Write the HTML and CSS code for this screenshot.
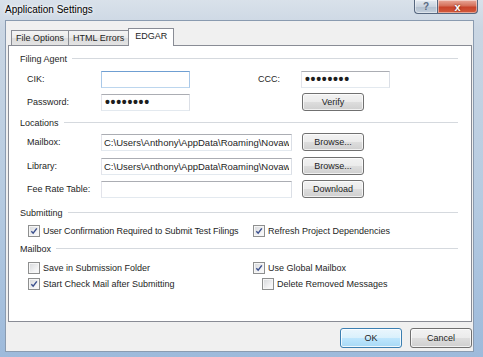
FILE: index.html
```html
<!DOCTYPE html>
<html lang="en">
<head>
  <meta charset="UTF-8">
  <title>Application Settings</title>
  <link rel="stylesheet" href="styles.css">
</head>
<body>
  <div class="window">
    <div class="titlebar">
      <span class="title">Application Settings</span>
      <div class="caption">
        <span class="cap-btn help">?</span>
        <span class="cap-btn close">x</span>
      </div>
    </div>

    <div class="client">
      <div class="tabs">
        <div class="tab">File Options</div>
        <div class="tab">HTML Errors</div>
        <div class="tab active">EDGAR</div>
      </div>

      <div class="panel">
        <!-- Filing Agent -->
        <div class="group-title">Filing Agent<span class="line"></span></div>
        <div class="row r1">
          <label class="lbl">CIK:</label>
          <input class="box small focus" type="text" value="">
          <label class="lbl ccc">CCC:</label>
          <input class="box small pw" type="password" value="abcdefgh">
        </div>
        <div class="row r2">
          <label class="lbl">Password:</label>
          <input class="box small pw" type="password" value="abcdefgh">
          <button class="btn verify" type="button">Verify</button>
        </div>

        <!-- Locations -->
        <div class="group-title g2">Locations<span class="line"></span></div>
        <div class="row r3">
          <label class="lbl">Mailbox:</label>
          <input class="box wide" type="text" value="C:\Users\Anthony\AppData\Roaming\Novaworks">
          <button class="btn" type="button">Browse...</button>
        </div>
        <div class="row r4">
          <label class="lbl">Library:</label>
          <input class="box wide" type="text" value="C:\Users\Anthony\AppData\Roaming\Novaworks">
          <button class="btn" type="button">Browse...</button>
        </div>
        <div class="row r5">
          <label class="lbl">Fee Rate Table:</label>
          <input class="box wide" type="text" value="">
          <button class="btn" type="button">Download</button>
        </div>

        <!-- Submitting -->
        <div class="group-title g3">Submitting<span class="line"></span></div>
        <div class="checks c1">
          <div class="check-col">
            <span class="cb on"><svg viewBox="0 0 12 12"><path d="M2.8 6.2 L5 8.6 L9.4 2.8"/></svg></span>
            <span class="tight">User Confirmation Required to Submit Test Filings</span>
          </div>
          <div class="check-col">
            <span class="cb on"><svg viewBox="0 0 12 12"><path d="M2.8 6.2 L5 8.6 L9.4 2.8"/></svg></span>
            Refresh Project Dependencies
          </div>
        </div>

        <!-- Mailbox -->
        <div class="group-title g4">Mailbox<span class="line"></span></div>
        <div class="checks c2">
          <div class="check-col">
            <span class="cb"></span>
            Save in Submission Folder
          </div>
          <div class="check-col">
            <span class="cb on"><svg viewBox="0 0 12 12"><path d="M2.8 6.2 L5 8.6 L9.4 2.8"/></svg></span>
            Use Global Mailbox
          </div>
        </div>
        <div class="checks c3">
          <div class="check-col">
            <span class="cb on"><svg viewBox="0 0 12 12"><path d="M2.8 6.2 L5 8.6 L9.4 2.8"/></svg></span>
            Start Check Mail after Submitting
          </div>
          <div class="check-col indent">
            <span class="cb"></span>
            Delete Removed Messages
          </div>
        </div>
      </div>

      <div class="footer">
        <button class="btn big default" type="button">OK</button>
        <button class="btn big" type="button">Cancel</button>
      </div>
    </div>
  </div>
</body>
</html>
```

FILE: styles.css
```css
/* base */
* {
  margin: 0;
  padding: 0;
  box-sizing: border-box;
}
body {
  width: 483px;
  height: 357px;
  overflow: hidden;
  font-family: 'Liberation Sans', Arial, sans-serif;
  font-size: 9px;
  color: #1e1e1e;
}
.window {
  width: 483px;
  height: 357px;
  background: linear-gradient(180deg, #d9e1ea 0%, #cad6e3 8%, #b6cbe1 55%, #9dbadb 100%);
}
/* title bar */
.titlebar {
  height: 20px;
  display: flex;
  align-items: flex-start;
  padding: 0 5px 0 5px;
}
.title {
  font-size: 10px;
  line-height: 19px;
  color: #000;
  text-shadow: 0 0 5px #fff, 0 0 3px #fff;
}
.caption {
  margin-left: auto;
  display: flex;
}
.cap-btn {
  height: 14px;
  border: 1px solid #56677f;
  border-top: none;
  display: flex;
  align-items: center;
  justify-content: center;
  font-weight: bold;
  box-shadow: inset 0 0 0 1px rgba(255,255,255,0.45);
}
.help {
  width: 23px;
  border-radius: 0 0 0 4px;
  border-right: none;
  background: linear-gradient(180deg, #e4eaf1 0%, #c9d3df 50%, #b3c0cf 51%, #c3cfdc 100%);
  color: #5a6b82;
  font-size: 10px;
}
.close {
  width: 41px;
  border-radius: 0 0 4px 0;
  background: linear-gradient(180deg, #e9a99a 0%, #d5705a 45%, #c8432a 55%, #d35a3c 100%);
  color: #fff;
  font-size: 11px;
  text-shadow: 0 0 2px #5a1408;
}
/* client area */
.client {
  margin-left: 5px;
  width: 469px;
  height: 332px;
  background: #f0f0f0;
  border: 1px solid #8a9bb0;
  padding: 7px 1px 0 2px;
}
.tabs {
  display: flex;
  align-items: flex-end;
  height: 17px;
  padding-left: 3px;
  position: relative;
  z-index: 1;
}
.tab {
  height: 15px;
  padding: 0 4px;
  line-height: 14px;
  border: 1px solid #898c95;
  border-bottom: none;
  margin-right: -1px;
  background: linear-gradient(180deg, #f4f4f4 0%, #eaeaea 50%, #dcdcdc 51%, #e3e3e3 100%);
}
.tab.active {
  height: 18px;
  margin-bottom: -1px;
  padding: 0 6px;
  line-height: 15px;
  background: #fff;
}
.panel {
  width: 464px;
  height: 277px;
  background: #fff;
  border: 1px solid #898c95;
  padding: 6px 13px 0 11px;
}
/* group headings */
.group-title {
  display: flex;
  align-items: center;
  height: 13px;
}
.group-title .line {
  flex: 1;
  margin-left: 5px;
  border-top: 1px solid #d5d9de;
}
.g2 { margin-top: 5px; }
.g3 { margin-top: 8px; }
.g4 { margin-top: 5px; }
/* field rows */
.row {
  display: flex;
  align-items: center;
  height: 18px;
  padding-left: 7px;
}
.r1 { margin-top: 5px; }
.r2 { margin-top: 5px; }
.r3 { margin-top: 4px; }
.r4 { margin-top: 6px; }
.r5 { margin-top: 5px; }
.lbl {
  width: 74px;
}
.lbl.ccc {
  width: 43px;
  margin-left: 68px;
}
.box {
  height: 17px;
  padding: 0 2px;
  border: 1px solid;
  border-color: #abadb3 #dbdfe6 #e3e9ef #e2e3ea;
  font-family: 'Liberation Sans', Arial, sans-serif;
  font-size: 9.5px;
  color: #1e1e1e;
  background: #fff;
  outline: none;
}
.box.small { width: 89px; }
.box.wide { width: 191px; }
.box.focus { border-color: #6f9fd2 #a9c8e8 #bcd6ee #a9c8e8; }
.box.pw {
  font-size: 14px;
  font-weight: bold;
  letter-spacing: 0.7px;
  padding-left: 3px;
}
.btn {
  width: 62px;
  height: 18px;
  margin-left: 10px;
  border: 1px solid #707070;
  border-radius: 3px;
  background: linear-gradient(180deg, #f2f2f2 0%, #ebebeb 50%, #dddddd 51%, #cfcfcf 100%);
  box-shadow: inset 0 0 0 1px rgba(255,255,255,0.7);
  font-family: 'Liberation Sans', Arial, sans-serif;
  font-size: 9px;
  color: #1e1e1e;
}
.btn.verify { margin-left: 112px; }
/* checkboxes */
.checks {
  display: flex;
  height: 13px;
  align-items: center;
  padding-left: 8px;
}
.c1 { margin-top: 5px; }
.c2 { margin-top: 6px; }
.c3 { margin-top: 3px; }
.check-col {
  display: flex;
  align-items: center;
  flex: none;
  width: 225px;
  white-space: nowrap;
}
.check-col.indent { padding-left: 9px; }
.tight { letter-spacing: -0.08px; }
.cb {
  width: 12px;
  height: 12px;
  margin-right: 3px;
  border: 1px solid #8e8f8f;
  background: linear-gradient(135deg, #d5d7da 0%, #f4f4f5 70%, #fbfbfb 100%);
  box-shadow: inset 0 0 0 1px #f6f6f6;
  flex: none;
}
.cb svg {
  display: block;
  width: 10px;
  height: 10px;
}
.cb path {
  fill: none;
  stroke: #3a4f8d;
  stroke-width: 1.7;
}
/* dialog buttons */
.footer {
  display: flex;
  justify-content: flex-end;
  gap: 8px;
  margin-top: 6px;
}
.btn.big {
  height: 20px;
  margin-left: 0;
}
.btn.default {
  border-color: #3c7fb1;
  background: linear-gradient(180deg, #eaf6fd 0%, #d9f0fc 50%, #bee6fd 51%, #a7d9f5 100%);
  box-shadow: inset 0 0 0 1px rgba(255,255,255,0.8);
}
```
